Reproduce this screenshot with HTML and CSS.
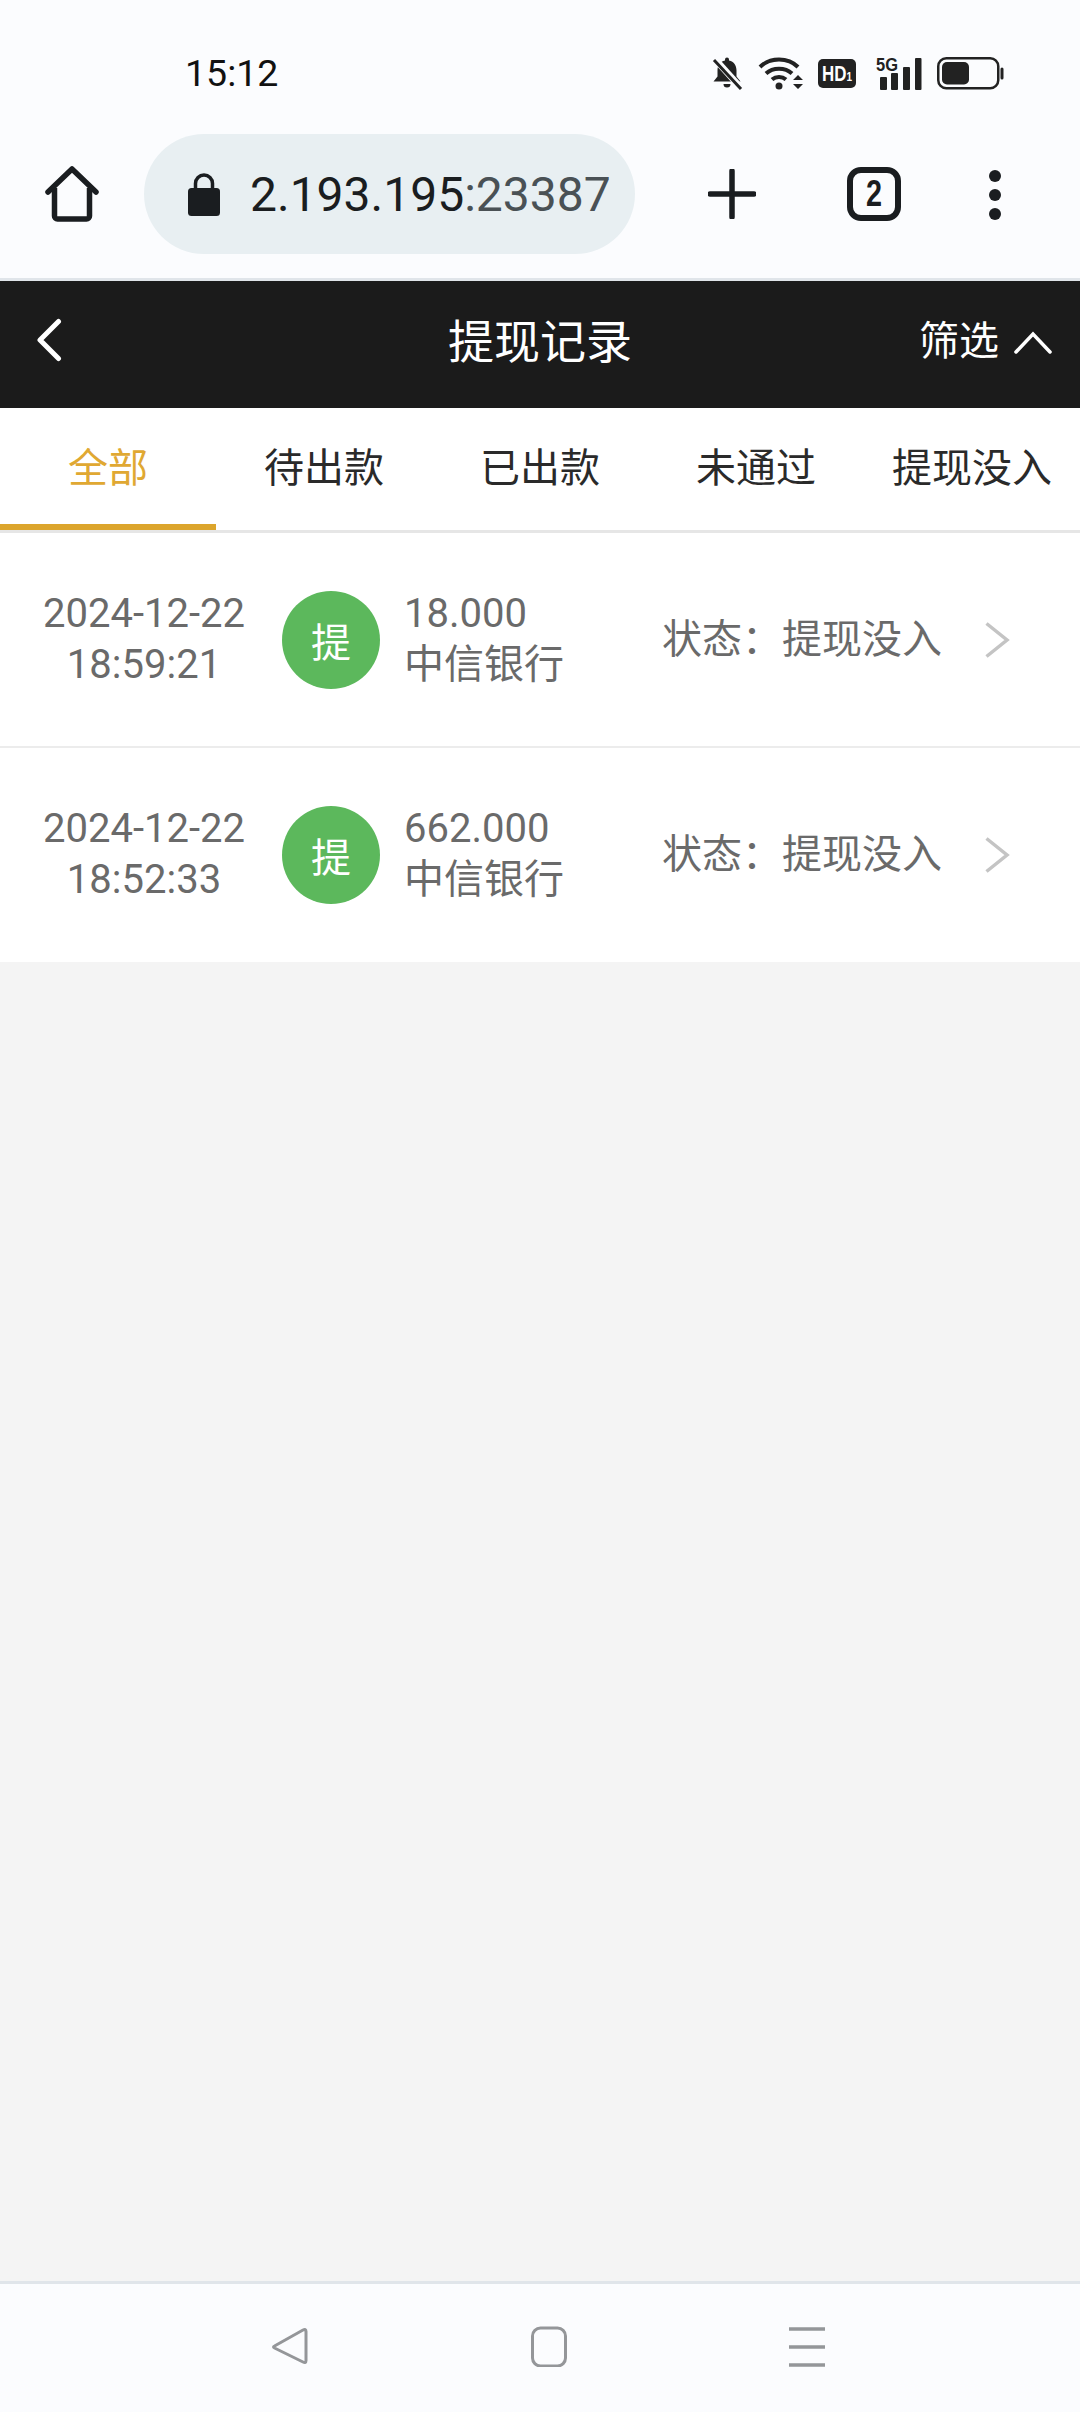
FILE: index.html
```html
<!DOCTYPE html>
<html lang="zh-CN">
<head>
    <meta charset="UTF-8">
    <meta name="viewport" content="width=device-width, initial-scale=1.0">
    <title>提现记录</title>
    <link rel="stylesheet" href="styles.css">
</head>
<body>
    <div class="phone">
        <!-- 系统状态栏 -->
        <div class="status-bar">
            <span class="clock">15:12</span>
            <div class="status-icons">
                <svg class="ic-bell" viewBox="0 0 32 34">
                    <path d="M16 1.5a2 2 0 0 1 2 2v1c5 1 7.500 5 7.500 10v6l4 5H2.500l4-5v-6c0-5 2.500-9 7.500-10v-1a2 2 0 0 1 2-2z" fill="#222"/>
                    <path d="M12.500 28h7a3.500 3.500 0 0 1-7 0z" fill="#222"/>
                    <path d="M3 2l27 30" stroke="#fbfcfe" stroke-width="6.500"/>
                    <path d="M3 4l27 29" stroke="#222" stroke-width="3"/>
                </svg>
                <svg class="ic-wifi" viewBox="0 0 46 34">
                    <path d="M2 11C12 1 30 1 40 11" fill="none" stroke="#222" stroke-width="4"/>
                    <path d="M8 17.500c7-6.500 19-6.500 26 0" fill="none" stroke="#222" stroke-width="4"/>
                    <path d="M14 23.500c4-3.500 10-3.500 14 0" fill="none" stroke="#222" stroke-width="4"/>
                    <circle cx="21" cy="30" r="3.500" fill="#222"/>
                    <path d="M40 19l5 5H35zM40 33l-5-5h10z" fill="#222"/>
                </svg>
                <svg class="ic-hd" viewBox="0 0 38 29">
                    <rect width="38" height="29" rx="5" fill="#222"/>
                    <text x="4" y="22" class="hd-text" textLength="30" lengthAdjust="spacingAndGlyphs">HD<tspan class="hd-sub">1</tspan></text>
                </svg>
                <svg class="ic-signal" viewBox="0 -6 46 46">
                    <text x="0" y="15" class="sig-text" textLength="22" lengthAdjust="spacingAndGlyphs">5G</text>
                    <rect x="4" y="21" width="7" height="13" rx="1" fill="#222"/>
                    <rect x="15" y="17" width="7" height="17" rx="1" fill="#222"/>
                    <rect x="27" y="11" width="7" height="23" rx="1" fill="#222"/>
                    <rect x="39" y="2" width="6.500" height="32" rx="1" fill="#222"/>
                </svg>
                <svg class="ic-battery" viewBox="0 0 67 33">
                    <rect x="1.250" y="1.250" width="60" height="30" rx="8" fill="none" stroke="#222" stroke-width="2.500"/>
                    <rect x="5" y="5" width="27" height="22.500" rx="5" fill="#222"/>
                    <rect x="63.500" y="10.500" width="3" height="12" rx="1.500" fill="#222"/>
                </svg>
            </div>
        </div>

        <!-- 浏览器工具栏 -->
        <div class="toolbar">
            <svg class="ic-home" viewBox="0 0 54 56">
                <path d="M3 26L27 3l24 23" fill="none" stroke="#1a1d20" stroke-width="5.500" stroke-linecap="round" stroke-linejoin="round"/>
                <path d="M9.500 22v28a3 3 0 0 0 3 3h29a3 3 0 0 0 3-3V22" fill="none" stroke="#1a1d20" stroke-width="5.500"/>
            </svg>
            <div class="address">
                <svg class="ic-lock" viewBox="0 0 32 43">
                    <path d="M7.500 17v-6.500a8.500 8.500 0 0 1 17 0V17" fill="none" stroke="#1a1d20" stroke-width="3.500"/>
                    <rect y="15" width="32" height="28" rx="3.500" fill="#1a1d20"/>
                </svg>
                <span class="url">2.193.195<span class="url-port">:23387</span></span>
            </div>
            <svg class="ic-plus" viewBox="0 0 48 50">
                <path d="M24 2v46M2 25h44" stroke="#1a1d20" stroke-width="5.500" stroke-linecap="round"/>
            </svg>
            <div class="tab-count"><span>2</span></div>
            <div class="more">
                <i></i><i></i><i></i>
            </div>
        </div>

        <!-- 页面标题 -->
        <div class="page-head">
            <svg class="ic-back" viewBox="0 0 26 44">
                <path d="M22.500 3.500L4 22l18.500 18.500" fill="none" stroke="#fff" stroke-width="5" stroke-linecap="round" stroke-linejoin="round"/>
            </svg>
            <h1>提现记录</h1>
            <div class="filter">
                <span>筛选</span>
                <svg class="ic-up" viewBox="0 0 38 24">
                    <path d="M2 22L19 4l17 18" fill="none" stroke="#fff" stroke-width="3.500" stroke-linecap="round"/>
                </svg>
            </div>
        </div>

        <div class="tabs">
            <div class="tab active">全部</div>
            <div class="tab">待出款</div>
            <div class="tab">已出款</div>
            <div class="tab">未通过</div>
            <div class="tab">提现没入</div>
        </div>

        <div class="records">
            <div class="record">
                <div class="record-time">2024-12-22<br>18:59:21</div>
                <div class="badge">提</div>
                <div class="record-info">
                    <div class="amount">18.000</div>
                    <div class="bank">中信银行</div>
                </div>
                <div class="record-state">状态：提现没入</div>
                <svg class="ic-next" viewBox="0 0 26 38">
                    <path d="M2.500 2.500L23 19 2.500 35.500" fill="none" stroke="#c4c4c4" stroke-width="3.500"/>
                </svg>
            </div>
            <div class="record">
                <div class="record-time">2024-12-22<br>18:52:33</div>
                <div class="badge">提</div>
                <div class="record-info">
                    <div class="amount">662.000</div>
                    <div class="bank">中信银行</div>
                </div>
                <div class="record-state">状态：提现没入</div>
                <svg class="ic-next" viewBox="0 0 26 38">
                    <path d="M2.500 2.500L23 19 2.500 35.500" fill="none" stroke="#c4c4c4" stroke-width="3.500"/>
                </svg>
            </div>
        </div>

        <div class="page-rest"></div>

        <!-- 系统导航栏 -->
        <div class="nav-bar">
            <svg class="ic-nav" viewBox="0 0 36 42">
                <path d="M2.500 21L31 5q3-1.500 3 1.500v29q0 3-3 1.500L2.500 23q-2-1 0-2z" fill="none" stroke="#949699" stroke-width="3"/>
            </svg>
            <svg class="ic-nav" viewBox="0 0 36 42">
                <rect x="1.500" y="3" width="33" height="38" rx="8" fill="none" stroke="#949699" stroke-width="3"/>
            </svg>
            <svg class="ic-nav" viewBox="0 0 36 42">
                <path d="M0 4h36M0 22h36M0 40h36" stroke="#949699" stroke-width="3.500"/>
            </svg>
        </div>
    </div>
</body>
</html>
```

FILE: styles.css
```css
* {
    box-sizing: border-box;
}

body {
    margin: 0px;
    font-family: Roboto, "Noto Sans CJK SC", sans-serif;
    background-color: #fbfcfe;
}

.phone {
    width: 1080px;
    height: 2412px;
    display: flex;
    flex-direction: column;
}

/* status bar */
.status-bar {
    height: 120px;
    flex: none;
    padding: 51px 76px 0 185px;
    display: flex;
    justify-content: space-between;
    align-items: flex-start;
}

.clock {
    font-size: 37.500px;
    line-height: 44px;
    color: #111;
}

.status-icons {
    display: flex;
    align-items: center;
    height: 44px;
}

.status-icons svg {
    display: block;
}

.hd-text {
    font-family: "Liberation Sans", sans-serif;
    font-size: 22px;
    font-weight: 700;
    fill: #fff;
}

.hd-sub {
    font-size: 13px;
}

.sig-text {
    font-family: "Liberation Sans", sans-serif;
    font-size: 19px;
    font-weight: 700;
    fill: #222;
}

.ic-bell {
    width: 32px;
    height: 34px;
}

.ic-wifi {
    width: 46px;
    height: 34px;
    margin-left: 15px;
}

.ic-hd {
    width: 38px;
    height: 29px;
    margin-left: 14px;
}

.ic-signal {
    width: 46px;
    height: 46px;
    margin-left: 20px;
}

.ic-battery {
    width: 67px;
    height: 33px;
    margin-left: 15px;
}

/* browser toolbar */
.toolbar {
    height: 161px;
    flex: none;
    padding: 14px 0 0 45px;
    display: flex;
    align-items: flex-start;
    border-bottom: 3px solid #e0e5ea;
}

.ic-home {
    width: 54px;
    height: 56px;
    margin-top: 32px;
    flex: none;
}

.address {
    width: 491px;
    height: 120px;
    margin-left: 45px;
    padding-left: 44px;
    border-radius: 60px;
    background-color: #e8eff2;
    display: flex;
    align-items: center;
    flex: none;
}

.ic-lock {
    width: 32px;
    height: 43px;
    flex: none;
}

.url {
    margin-left: 30px;
    font-size: 48px;
    color: #1a1d20;
    white-space: nowrap;
}

.url-port {
    color: #4a5155;
}

.ic-plus {
    width: 48px;
    height: 50px;
    margin: 35px 0 0 73px;
    flex: none;
}

.tab-count {
    width: 54px;
    height: 54px;
    margin: 33px 0 0 91px;
    border: 6px solid #1a1d20;
    border-radius: 14px;
    font-family: "Liberation Sans", sans-serif;
    font-size: 36px;
    font-weight: 700;
    line-height: 42px;
    text-align: center;
    color: #1a1d20;
    flex: none;
}

.tab-count span {
    display: inline-block;
    transform: scaleX(0.8);
}

.more {
    margin: 36px 0 0 88px;
    display: flex;
    flex-direction: column;
    gap: 7px;
}

.more i {
    display: block;
    width: 12px;
    height: 12px;
    border-radius: 50%;
    background-color: #1a1d20;
}

/* page header */
.page-head {
    height: 127px;
    flex: none;
    background-color: #1b1b1b;
    color: #fff;
    position: relative;
    display: flex;
    align-items: center;
    justify-content: center;
}

.page-head h1 {
    margin: 0;
    font-size: 46px;
    font-weight: 400;
    line-height: 60px;
    position: relative;
    top: -3px;
}

.ic-back {
    width: 26px;
    height: 44px;
    position: absolute;
    left: 36px;
    top: 37px;
}

.filter {
    position: absolute;
    right: 28px;
    top: 34px;
    display: flex;
    align-items: center;
    gap: 15px;
    font-size: 40px;
    line-height: 54px;
}

.ic-up {
    width: 38px;
    height: 24px;
}

/* tabs */
.tabs {
    height: 125px;
    flex: none;
    background-color: #fff;
    display: flex;
    border-bottom: 3px solid #e6e6e6;
}

.tab {
    width: 216px;
    height: 122px;
    font-size: 40px;
    line-height: 122px;
    text-align: center;
    color: #2a2a2a;
    white-space: nowrap;
}

.tab.active {
    color: #e0a832;
    border-bottom: 6px solid #dca52c;
}

/* record list */
.records {
    flex: none;
    background-color: #fff;
}

.record {
    height: 215px;
    display: flex;
    align-items: center;
    color: #6a6a6a;
    border-bottom: 2px solid #ececec;
}

.record:last-child {
    height: 214px;
    border-bottom: none;
}

.record-time {
    width: 288px;
    padding-bottom: 2px;
    flex: none;
    font-size: 40px;
    line-height: 51px;
    text-align: center;
}

.badge {
    width: 98px;
    height: 98px;
    margin-left: -6px;
    border-radius: 50%;
    background-color: #5cb85c;
    color: #fff;
    font-size: 40px;
    line-height: 105px;
    text-align: center;
    flex: none;
}

.record-info {
    width: 258px;
    margin-left: 24px;
    padding-bottom: 2px;
    flex: none;
    font-size: 40px;
    line-height: 51px;
}

.record-state {
    width: 320px;
    height: 60px;
    line-height: 60px;
    flex: none;
    font-size: 40px;
    white-space: nowrap;
}

.ic-next {
    width: 26px;
    height: 38px;
    margin-left: 2px;
    flex: none;
}

.page-rest {
    flex: 1;
    background-color: #f4f4f4;
}

/* system nav */
.nav-bar {
    height: 131px;
    flex: none;
    padding: 0 255px 4px 272px;
    display: flex;
    justify-content: space-between;
    align-items: center;
    border-top: 3px solid #e0e5ea;
}

.ic-nav {
    width: 36px;
    height: 42px;
}
```
